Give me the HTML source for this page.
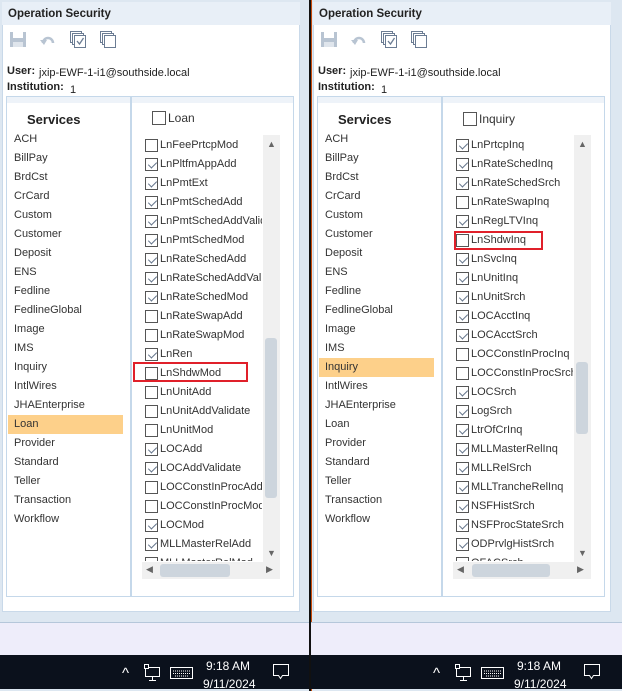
<!DOCTYPE html>
<html><head><meta charset="utf-8"><style>
*{margin:0;padding:0;box-sizing:border-box}
body{width:622px;height:691px;position:relative;overflow:hidden;background:#fff;font-family:"Liberation Sans",sans-serif;font-size:11px;color:#222}
.pane{position:absolute;top:0;width:311px;height:691px;overflow:hidden;background:#dde7f1}
.panel{position:absolute;left:2px;top:2px;width:298px;height:610px;background:#fff;border:1px solid #c9d9e9}
.hdr{position:absolute;left:2px;top:2px;width:298px;height:23px;background:#e8eff7;font-weight:bold;font-size:11.5px;padding:6px 0 0 6px;color:#222}
.a{position:absolute;white-space:nowrap}
.box{position:absolute;left:6px;top:96px;width:288px;height:501px;border:1px solid #c5d8ea}
.band{position:absolute;left:7px;top:97px;width:286px;height:6px;background:#eef3f9}
.lb{position:absolute;left:130px;top:96px;width:2px;height:501px;background:#c5d8ea}
.svc{position:absolute;left:14px;font-size:11px;line-height:19px;height:19px;color:#333}
.hl{position:absolute;left:8px;width:115px;height:19px;background:#fdd08a}
.clip{position:absolute;left:135px;top:134px;width:127px;height:427px;overflow:hidden}
.r{position:absolute;left:0;height:19px;width:200px;line-height:19px;white-space:nowrap;color:#333}
.cb{position:absolute;left:10px;top:3px;width:13px;height:13px;border:1px solid #555;background:#fff}
.c::after{content:"";position:absolute;left:3.5px;top:0.5px;width:4px;height:7px;border:solid #66768c;border-width:0 1.3px 1.3px 0;transform:rotate(45deg)}
.t{position:absolute;left:25px;top:0}
.vs{position:absolute;left:263px;top:135px;width:17px;height:430px;background:#f0f0f0}
.hs{position:absolute;left:142px;top:562px;width:138px;height:17px;background:#f0f0f0}
.th{position:absolute;background:#cdd5dd;border-radius:3px}
.red{position:absolute;border:2px solid #e0202a}
.lav{position:absolute;left:0;top:622px;width:311px;height:33px;background:#eeedfa;border-top:1px solid #b5c7da}
.tb{position:absolute;left:0;top:655px;width:310px;height:34px;background:#0b111c;color:#fff}
</style></head><body>

<!-- LEFT PANE -->
<div class="pane" style="left:0">
<div class="panel"></div>
<div class="hdr">Operation Security</div>
<svg class="a" style="left:10px;top:31px" width="110" height="18">
<rect x="0" y="1" width="16" height="15" fill="#b8c4d2"/><rect x="3" y="1" width="10" height="6" fill="#fff"/><rect x="3" y="11" width="10" height="5" fill="#dfe5ec"/>
<path d="M33 12 a5 5 0 1 1 10 0" fill="none" stroke="#b8c4d2" stroke-width="2.5"/><path d="M30 9 l4 5 l3 -5z" fill="#b8c4d2"/>
<g fill="#fff" stroke="#6b7c93"><rect x="60.5" y="0.5" width="11" height="11"/><rect x="62.5" y="2.5" width="11" height="11"/><rect x="64.5" y="4.5" width="11" height="12"/></g><path d="M67 10 l2.5 3 l4 -6" fill="none" stroke="#6b7c93" stroke-width="1.3"/>
<g fill="#fff" stroke="#6b7c93"><rect x="90.5" y="0.5" width="11" height="11"/><rect x="92.5" y="2.5" width="11" height="11"/><rect x="94.5" y="4.5" width="11" height="12"/></g>
</svg>
<div class="a" style="left:7px;top:65px;font-weight:bold">User:</div>
<div class="a" style="left:39px;top:67px">jxip-EWF-1-i1@southside.local</div>
<div class="a" style="left:7px;top:81px;font-weight:bold">Institution:</div>
<div class="a" style="left:70px;top:84px">1</div>
<div class="box"></div><div class="band"></div><div class="lb"></div>
<div class="a" style="left:27px;top:112px;font-weight:bold;font-size:13px">Services</div>
<div class="hl" style="top:415px"></div>
<div class="svc" style="top:130px">ACH</div><div class="svc" style="top:149px">BillPay</div><div class="svc" style="top:168px">BrdCst</div><div class="svc" style="top:187px">CrCard</div><div class="svc" style="top:206px">Custom</div><div class="svc" style="top:225px">Customer</div><div class="svc" style="top:244px">Deposit</div><div class="svc" style="top:263px">ENS</div><div class="svc" style="top:282px">Fedline</div><div class="svc" style="top:301px">FedlineGlobal</div><div class="svc" style="top:320px">Image</div><div class="svc" style="top:339px">IMS</div><div class="svc" style="top:358px">Inquiry</div><div class="svc" style="top:377px">IntlWires</div><div class="svc" style="top:396px">JHAEnterprise</div><div class="svc" style="top:415px">Loan</div><div class="svc" style="top:434px">Provider</div><div class="svc" style="top:453px">Standard</div><div class="svc" style="top:472px">Teller</div><div class="svc" style="top:491px">Transaction</div><div class="svc" style="top:510px">Workflow</div>
<div class="r" style="left:142px;top:109px;font-size:12px"><span class="cb" style="left:10px;top:2px;width:14px;height:14px"></span><span class="t" style="left:26px">Loan</span></div>
<div class="clip">
<div class="r" style="top:2px"><span class="cb"></span><span class="t">LnFeePrtcpMod</span></div>
<div class="r" style="top:21px"><span class="cb c"></span><span class="t">LnPltfmAppAdd</span></div>
<div class="r" style="top:40px"><span class="cb c"></span><span class="t">LnPmtExt</span></div>
<div class="r" style="top:59px"><span class="cb c"></span><span class="t">LnPmtSchedAdd</span></div>
<div class="r" style="top:78px"><span class="cb c"></span><span class="t">LnPmtSchedAddValidate</span></div>
<div class="r" style="top:97px"><span class="cb c"></span><span class="t">LnPmtSchedMod</span></div>
<div class="r" style="top:116px"><span class="cb c"></span><span class="t">LnRateSchedAdd</span></div>
<div class="r" style="top:135px"><span class="cb c"></span><span class="t">LnRateSchedAddValidate</span></div>
<div class="r" style="top:154px"><span class="cb c"></span><span class="t">LnRateSchedMod</span></div>
<div class="r" style="top:173px"><span class="cb"></span><span class="t">LnRateSwapAdd</span></div>
<div class="r" style="top:192px"><span class="cb"></span><span class="t">LnRateSwapMod</span></div>
<div class="r" style="top:211px"><span class="cb c"></span><span class="t">LnRen</span></div>
<div class="r" style="top:230px"><span class="cb"></span><span class="t">LnShdwMod</span></div>
<div class="r" style="top:249px"><span class="cb"></span><span class="t">LnUnitAdd</span></div>
<div class="r" style="top:268px"><span class="cb"></span><span class="t">LnUnitAddValidate</span></div>
<div class="r" style="top:287px"><span class="cb"></span><span class="t">LnUnitMod</span></div>
<div class="r" style="top:306px"><span class="cb c"></span><span class="t">LOCAdd</span></div>
<div class="r" style="top:325px"><span class="cb c"></span><span class="t">LOCAddValidate</span></div>
<div class="r" style="top:344px"><span class="cb"></span><span class="t">LOCConstInProcAdd</span></div>
<div class="r" style="top:363px"><span class="cb"></span><span class="t">LOCConstInProcMod</span></div>
<div class="r" style="top:382px"><span class="cb c"></span><span class="t">LOCMod</span></div>
<div class="r" style="top:401px"><span class="cb c"></span><span class="t">MLLMasterRelAdd</span></div>
<div class="r" style="top:420px"><span class="cb c"></span><span class="t">MLLMasterRelMod</span></div>
</div>
<div class="red" style="left:133px;top:362px;width:115px;height:20px"></div>
<div class="vs"><div class="a" style="left:4px;top:4px;font-size:9px;color:#666">▲</div><div class="th" style="left:2px;top:203px;width:12px;height:160px"></div><div class="a" style="left:4px;top:413px;font-size:9px;color:#666">▼</div></div>
<div class="hs"><div class="a" style="left:4px;top:2px;font-size:9px;color:#666">◀</div><div class="th" style="left:18px;top:2px;width:70px;height:13px"></div><div class="a" style="left:124px;top:2px;font-size:9px;color:#666">▶</div></div>
<div class="lav"></div>
<div class="tb">
<div class="a" style="left:122px;top:10px;font-size:15px">^</div>
<svg class="a" style="left:144px;top:9px" width="52" height="18"><rect x="1.5" y="3.5" width="14" height="9" fill="none" stroke="#fff"/><rect x="0.5" y="0.5" width="4" height="4" fill="#0b111c" stroke="#fff"/><path d="M8.5 12.5v4M5 16.5h7" stroke="#fff"/><rect x="26.5" y="3.5" width="22" height="11" fill="none" stroke="#fff"/><path d="M29 7h17M29 9.5h17M31 12h13" stroke="#fff" stroke-dasharray="1 1"/></svg>
<div class="a" style="left:206px;top:4px;font-size:12px">9:18 AM</div>
<div class="a" style="left:203px;top:22px;font-size:12px">9/11/2024</div>
<svg class="a" style="left:273px;top:9px" width="18" height="17"><path d="M0.5 0.5h15v11h-6l-2 3l-2 -3h-5z" fill="none" stroke="#fff"/></svg>
</div>
<div class="a" style="left:309px;top:0;width:2px;height:691px;background:#111"></div>
</div>

<!-- RIGHT PANE -->
<div class="pane" style="left:311px;width:311px">
<div class="a" style="left:0;top:0;width:1px;height:691px;background:#c84a0b"></div>
<div class="panel"></div>
<div class="hdr">Operation Security</div>
<svg class="a" style="left:10px;top:31px" width="110" height="18">
<rect x="0" y="1" width="16" height="15" fill="#b8c4d2"/><rect x="3" y="1" width="10" height="6" fill="#fff"/><rect x="3" y="11" width="10" height="5" fill="#dfe5ec"/>
<path d="M33 12 a5 5 0 1 1 10 0" fill="none" stroke="#b8c4d2" stroke-width="2.5"/><path d="M30 9 l4 5 l3 -5z" fill="#b8c4d2"/>
<g fill="#fff" stroke="#6b7c93"><rect x="60.5" y="0.5" width="11" height="11"/><rect x="62.5" y="2.5" width="11" height="11"/><rect x="64.5" y="4.5" width="11" height="12"/></g><path d="M67 10 l2.5 3 l4 -6" fill="none" stroke="#6b7c93" stroke-width="1.3"/>
<g fill="#fff" stroke="#6b7c93"><rect x="90.5" y="0.5" width="11" height="11"/><rect x="92.5" y="2.5" width="11" height="11"/><rect x="94.5" y="4.5" width="11" height="12"/></g>
</svg>
<div class="a" style="left:7px;top:65px;font-weight:bold">User:</div>
<div class="a" style="left:39px;top:67px">jxip-EWF-1-i1@southside.local</div>
<div class="a" style="left:7px;top:81px;font-weight:bold">Institution:</div>
<div class="a" style="left:70px;top:84px">1</div>
<div class="box"></div><div class="band"></div><div class="lb"></div>
<div class="a" style="left:27px;top:112px;font-weight:bold;font-size:13px">Services</div>
<div class="hl" style="top:358px"></div>
<div class="svc" style="top:130px">ACH</div><div class="svc" style="top:149px">BillPay</div><div class="svc" style="top:168px">BrdCst</div><div class="svc" style="top:187px">CrCard</div><div class="svc" style="top:206px">Custom</div><div class="svc" style="top:225px">Customer</div><div class="svc" style="top:244px">Deposit</div><div class="svc" style="top:263px">ENS</div><div class="svc" style="top:282px">Fedline</div><div class="svc" style="top:301px">FedlineGlobal</div><div class="svc" style="top:320px">Image</div><div class="svc" style="top:339px">IMS</div><div class="svc" style="top:358px">Inquiry</div><div class="svc" style="top:377px">IntlWires</div><div class="svc" style="top:396px">JHAEnterprise</div><div class="svc" style="top:415px">Loan</div><div class="svc" style="top:434px">Provider</div><div class="svc" style="top:453px">Standard</div><div class="svc" style="top:472px">Teller</div><div class="svc" style="top:491px">Transaction</div><div class="svc" style="top:510px">Workflow</div>
<div class="r" style="left:142px;top:110px;font-size:12px"><span class="cb" style="left:10px;top:2px;width:14px;height:14px"></span><span class="t" style="left:26px">Inquiry</span></div>
<div class="clip">
<div class="r" style="top:2px"><span class="cb c"></span><span class="t">LnPrtcpInq</span></div>
<div class="r" style="top:21px"><span class="cb c"></span><span class="t">LnRateSchedInq</span></div>
<div class="r" style="top:40px"><span class="cb c"></span><span class="t">LnRateSchedSrch</span></div>
<div class="r" style="top:59px"><span class="cb"></span><span class="t">LnRateSwapInq</span></div>
<div class="r" style="top:78px"><span class="cb c"></span><span class="t">LnRegLTVInq</span></div>
<div class="r" style="top:97px"><span class="cb"></span><span class="t">LnShdwInq</span></div>
<div class="r" style="top:116px"><span class="cb c"></span><span class="t">LnSvcInq</span></div>
<div class="r" style="top:135px"><span class="cb c"></span><span class="t">LnUnitInq</span></div>
<div class="r" style="top:154px"><span class="cb c"></span><span class="t">LnUnitSrch</span></div>
<div class="r" style="top:173px"><span class="cb c"></span><span class="t">LOCAcctInq</span></div>
<div class="r" style="top:192px"><span class="cb c"></span><span class="t">LOCAcctSrch</span></div>
<div class="r" style="top:211px"><span class="cb"></span><span class="t">LOCConstInProcInq</span></div>
<div class="r" style="top:230px"><span class="cb"></span><span class="t">LOCConstInProcSrch</span></div>
<div class="r" style="top:249px"><span class="cb c"></span><span class="t">LOCSrch</span></div>
<div class="r" style="top:268px"><span class="cb c"></span><span class="t">LogSrch</span></div>
<div class="r" style="top:287px"><span class="cb c"></span><span class="t">LtrOfCrInq</span></div>
<div class="r" style="top:306px"><span class="cb c"></span><span class="t">MLLMasterRelInq</span></div>
<div class="r" style="top:325px"><span class="cb c"></span><span class="t">MLLRelSrch</span></div>
<div class="r" style="top:344px"><span class="cb c"></span><span class="t">MLLTrancheRelInq</span></div>
<div class="r" style="top:363px"><span class="cb c"></span><span class="t">NSFHistSrch</span></div>
<div class="r" style="top:382px"><span class="cb c"></span><span class="t">NSFProcStateSrch</span></div>
<div class="r" style="top:401px"><span class="cb c"></span><span class="t">ODPrvlgHistSrch</span></div>
<div class="r" style="top:420px"><span class="cb c"></span><span class="t">OFACSrch</span></div>
</div>
<div class="red" style="left:143px;top:231px;width:89px;height:19px"></div>
<div class="vs"><div class="a" style="left:4px;top:4px;font-size:9px;color:#666">▲</div><div class="th" style="left:2px;top:227px;width:12px;height:72px"></div><div class="a" style="left:4px;top:413px;font-size:9px;color:#666">▼</div></div>
<div class="hs"><div class="a" style="left:4px;top:2px;font-size:9px;color:#666">◀</div><div class="th" style="left:19px;top:2px;width:78px;height:13px"></div><div class="a" style="left:124px;top:2px;font-size:9px;color:#666">▶</div></div>
<div class="lav"></div>
<div class="tb" style="width:311px">
<div class="a" style="left:122px;top:10px;font-size:15px">^</div>
<svg class="a" style="left:144px;top:9px" width="52" height="18"><rect x="1.5" y="3.5" width="14" height="9" fill="none" stroke="#fff"/><rect x="0.5" y="0.5" width="4" height="4" fill="#0b111c" stroke="#fff"/><path d="M8.5 12.5v4M5 16.5h7" stroke="#fff"/><rect x="26.5" y="3.5" width="22" height="11" fill="none" stroke="#fff"/><path d="M29 7h17M29 9.5h17M31 12h13" stroke="#fff" stroke-dasharray="1 1"/></svg>
<div class="a" style="left:206px;top:4px;font-size:12px">9:18 AM</div>
<div class="a" style="left:203px;top:22px;font-size:12px">9/11/2024</div>
<svg class="a" style="left:273px;top:9px" width="18" height="17"><path d="M0.5 0.5h15v11h-6l-2 3l-2 -3h-5z" fill="none" stroke="#fff"/></svg>
</div>
</div>
</body></html>
